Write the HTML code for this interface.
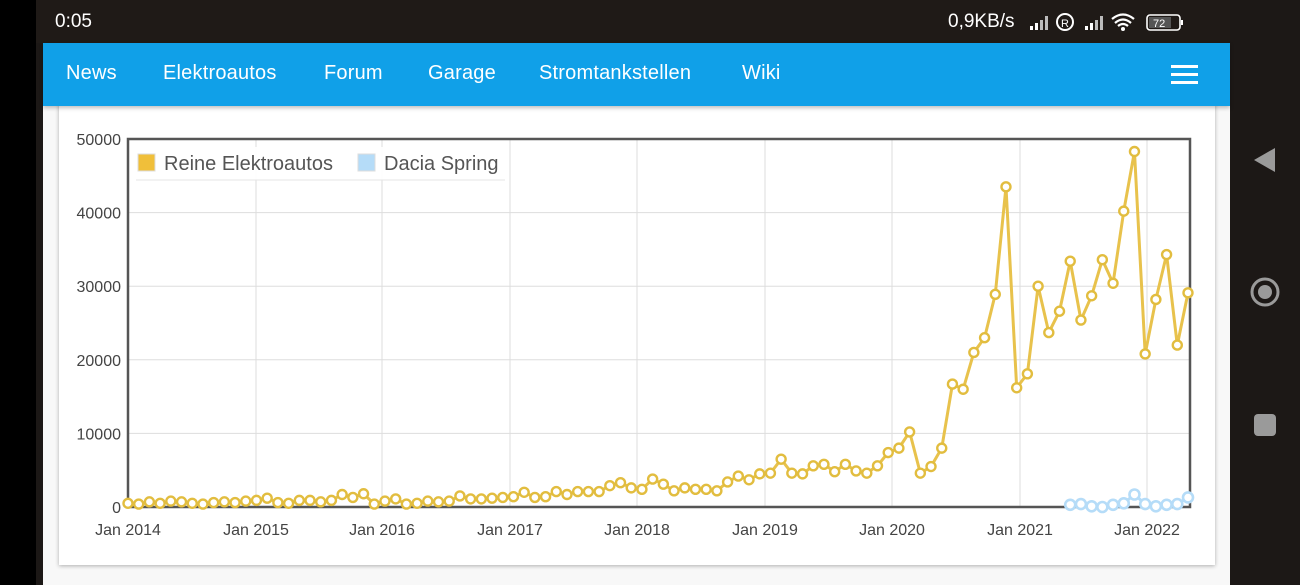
<!DOCTYPE html>
<html><head><meta charset="utf-8"><style>
*{margin:0;padding:0;box-sizing:border-box}
body{width:1300px;height:585px;overflow:hidden;background:#1c1816;font-family:"Liberation Sans",sans-serif;position:relative}
#left{position:absolute;left:0;top:0;width:36px;height:585px;background:#000}
#status{position:absolute;left:36px;top:0;width:1194px;height:43px;background:#1f1a17;color:#fff}
#page{position:absolute;left:43px;top:43px;width:1187px;height:542px;background:#f8f8f8}
#nav{position:absolute;left:43px;top:43px;width:1187px;height:63px;background:#10a0e8;box-shadow:0 2px 4px rgba(0,0,0,.25)}
#nav span{position:absolute;top:19px;color:#fff;font-size:20px;letter-spacing:0.2px}
#card{position:absolute;left:59px;top:100px;width:1156px;height:465px;background:#fff;box-shadow:0 1px 4px rgba(0,0,0,.3)}
</style></head><body>
<div id="left"></div>
<div id="status">
<div style="position:absolute;left:19px;top:11px;font-size:19px">0:05</div>
<div style="position:absolute;left:912px;top:11px;font-size:19px">0,9KB/s</div>
<svg style="position:absolute;left:994px;top:12px" width="160" height="22">
<g fill="#bbb"><rect x="0" y="14" width="3" height="4" fill="#fff"/><rect x="5" y="11" width="3" height="7" fill="#fff"/><rect x="10" y="8" width="3" height="10"/><rect x="15" y="4" width="3" height="14"/></g>
<circle cx="35" cy="10" r="8" fill="none" stroke="#fff" stroke-width="2"/><text x="31" y="15" font-size="11" fill="#fff" font-family="Liberation Sans">R</text>
<g fill="#bbb"><rect x="55" y="14" width="3" height="4" fill="#fff"/><rect x="60" y="11" width="3" height="7" fill="#fff"/><rect x="65" y="8" width="3" height="10"/><rect x="70" y="4" width="3" height="14"/></g>
<path d="M82 7 Q93 -2 104 7 M85 11 Q93 4 101 11 M88 14 Q93 10 98 14" stroke="#fff" stroke-width="2.2" fill="none"/><circle cx="93" cy="17" r="2" fill="#fff"/>
<rect x="117" y="3" width="33" height="15" rx="3" fill="none" stroke="#fff" stroke-width="1.6"/><rect x="119" y="5" width="22" height="11" fill="#555"/><rect x="151" y="8" width="2" height="5" fill="#fff"/>
<text x="123" y="15" font-size="11" fill="#fff" font-family="Liberation Sans">72</text>
</svg>
</div>
<div id="page"></div>
<div id="card"></div>
<div id="nav">
<span style="left:23px">News</span><span style="left:120px">Elektroautos</span><span style="left:281px">Forum</span><span style="left:385px">Garage</span><span style="left:496px">Stromtankstellen</span><span style="left:699px">Wiki</span>
<div style="position:absolute;left:1128px;top:22px;width:27px;height:3px;background:#fff"></div>
<div style="position:absolute;left:1128px;top:30px;width:27px;height:3px;background:#fff"></div>
<div style="position:absolute;left:1128px;top:38px;width:27px;height:3px;background:#fff"></div>
</div>
<svg style="position:absolute;left:1230px;top:0" width="70" height="585">
<path d="M45 148 L45 172 L24 160 Z" fill="#9a9a9a"/>
<circle cx="35" cy="292" r="13" fill="none" stroke="#9a9a9a" stroke-width="3"/><circle cx="35" cy="292" r="7" fill="#9a9a9a"/>
<rect x="24" y="414" width="22" height="22" rx="4" fill="#9a9a9a"/>
</svg>
<svg id="ch" style="position:absolute;left:0;top:0" width="1230" height="585" font-family="Liberation Sans"></svg>
<script>
var y=[0.5,0.4,0.7,0.5,0.8,0.7,0.5,0.4,0.6,0.7,0.6,0.8,
0.9,0.6,0.4,1.2,0.6,0.5,0.9,0.9,0.7,0.9,1.7,1.3,1.8,
0.4,0.8,1.1,0.4,0.5,0.8,0.7,0.8,1.5,1.1,1.1,1.2,
1.3,1.4,2.0,1.3,1.4,2.1,1.7,2.1,2.1,2.1,2.9,3.3,
2.6,2.4,3.8,3.1,2.2,2.6,2.4,2.4,2.2,3.4,4.2,3.7,
4.5,4.6,6.5,4.6,4.5,5.6,5.8,4.8,5.8,4.9,4.6,5.6,
7.4,8.0,10.2,4.6,5.5,8.0,16.7,16.0,21.0,23.0,28.9,43.5,
16.2,18.1,30.0,23.7,26.6,33.4,25.4,28.7,33.6,30.4,40.2,48.3,
20.8,28.2,34.3,22.0,29.1];
while(y.length>100)y.splice(13,1);
var b=[0.3,0.4,0.1,0,0.3,0.5,1.7,0.4,0.1,0.3,0.4,1.3];
function X(i){return 128+i*(1060/99)}
function Y(v){return 507-v*7.36}
var s='';
for(var k=0;k<=5;k++){var yy=Y(k*10);s+='<line x1="128" x2="1190" y1="'+yy+'" y2="'+yy+'" stroke="#ddd"/>';
s+='<text x="121" y="'+(yy+6)+'" text-anchor="end" font-size="16" fill="#444">'+(k*10000)+'</text>';}
var yrs=[128,256,382,510,637,765,892,1020,1147];
yrs.forEach(function(x,i){s+='<line x1="'+x+'" x2="'+x+'" y1="139" y2="507" stroke="#ddd"/>';
s+='<text x="'+x+'" y="535" text-anchor="middle" font-size="16" fill="#444">Jan '+(2014+i)+'</text>';});
s+='<rect x="128" y="139" width="1062" height="368" fill="none" stroke="#555" stroke-width="2.5"/>';
s+='<rect x="135" y="147" width="370" height="33" fill="#fff" opacity=".9"/><line x1="136" x2="505" y1="180" y2="180" stroke="#e4e4e4"/>';
s+='<rect x="138" y="154" width="17" height="17" fill="#f0bf3a" stroke="#ddd"/><text x="164" y="170" font-size="20" fill="#555">Reine Elektroautos</text>';
s+='<rect x="358" y="154" width="17" height="17" fill="#b5dcf8" stroke="#ddd"/><text x="384" y="170" font-size="20" fill="#555">Dacia Spring</text>';
var p=y.map(function(v,i){return X(i)+','+Y(v)}).join(' ');
s+='<polyline points="'+p+'" fill="none" stroke="#e8c24c" stroke-width="3"/>';
y.forEach(function(v,i){s+='<circle cx="'+X(i)+'" cy="'+Y(v)+'" r="4.5" fill="#fff" stroke="#e2bd3f" stroke-width="2.4"/>';});
var bp=b.map(function(v,i){return X(88+i)+','+Y(v)}).join(' ');
s+='<polyline points="'+bp+'" fill="none" stroke="#b5dcf8" stroke-width="3"/>';
b.forEach(function(v,i){s+='<circle cx="'+X(88+i)+'" cy="'+Y(v)+'" r="5" fill="#fff" stroke="#b5dcf8" stroke-width="2.6"/>';});
document.getElementById('ch').innerHTML=s;
</script>
</body></html>
